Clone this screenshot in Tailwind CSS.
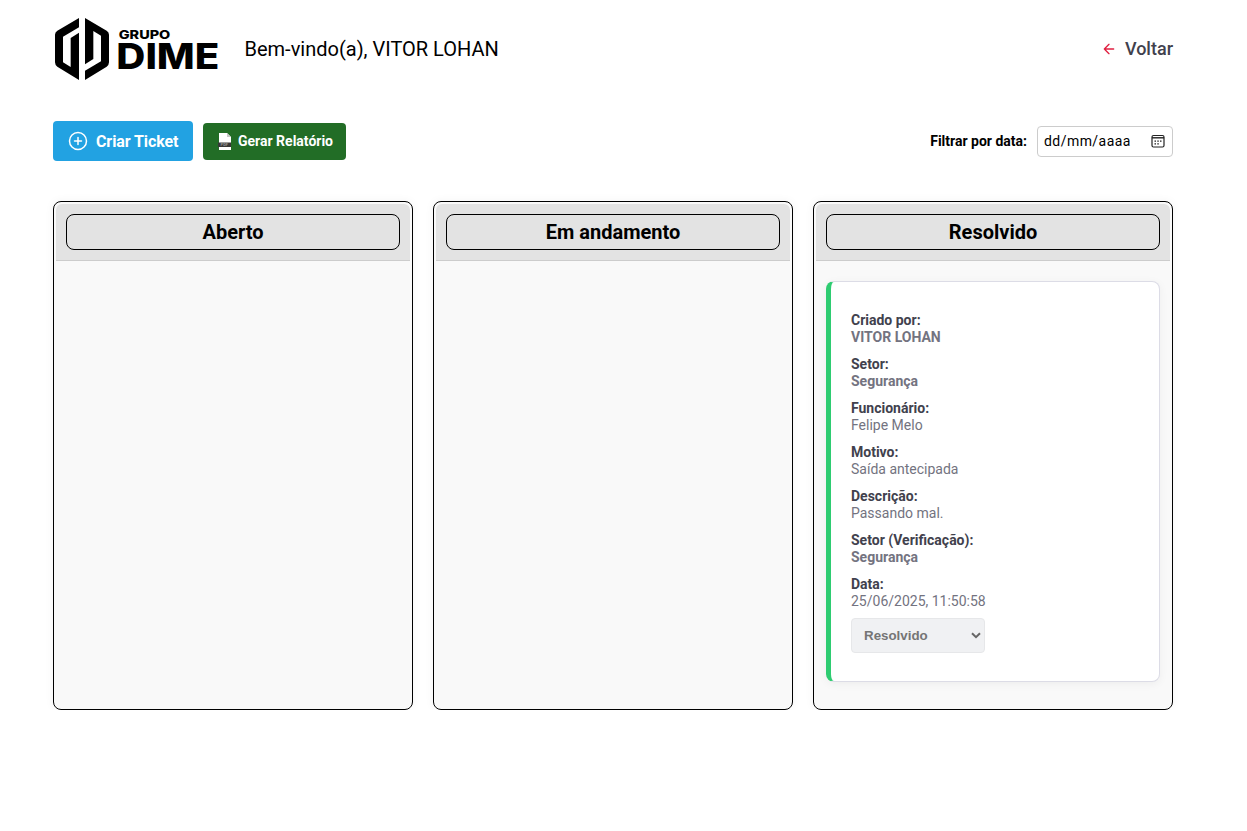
<!DOCTYPE html>
<html lang="pt-BR">
<head>
<meta charset="utf-8">
<title>Tickets</title>
<script src="https://cdn.jsdelivr.net/npm/@tailwindcss/browser@4"></script>
</head>
<body class="bg-white font-['Roboto',sans-serif] text-black">
<div class="ml-[53px] w-[1120px]">
  <header class="flex h-[98px] items-center">
    <svg class="-ml-[3px] mt-[-2px] h-[76px] w-[180px]" viewBox="0 0 540 228">
      <path d="M87 24 22 62Q15 66 15 74V157Q15 165 22 170L87 210V68L62 84V171L39 157V80L87 52Z"/>
      <path d="M105 24 170 62Q177 66 177 74V157Q177 165 170 170L105 210V182L153 154V77L130 63V147L105 163Z"/>
      <g font-family="Inter, sans-serif" font-weight="800">
        <text x="206" y="86" font-size="36" textLength="155" lengthAdjust="spacingAndGlyphs">GRUPO</text>
        <text x="199" y="177" font-size="107" textLength="309" lengthAdjust="spacingAndGlyphs">DIME</text>
      </g>
    </svg>
    <h1 class="ml-[14.5px] text-[20px] leading-6">Bem-vindo(a), VITOR LOHAN</h1>
    <a class="ml-auto flex items-center text-[18px] font-medium text-[#41414d]">
      <svg class="mr-2 size-4" viewBox="0 0 24 24" fill="none" stroke="#e02041" stroke-width="2" stroke-linecap="round" stroke-linejoin="round"><path d="M19 12H5M12 19l-7-7 7-7"/></svg><span class="-mt-[2px]">Voltar</span></a>
  </header>
  <div class="mt-[23px] flex h-10 items-center">
    <button class="flex h-10 w-[140px] items-center rounded-[4px] bg-[#22a2e2] pl-[15px] text-[16px] font-bold tracking-[-0.1px] whitespace-nowrap text-white">
      <svg class="mr-2 size-5" viewBox="0 0 20 20" fill="none" stroke="white" stroke-width="1.5" stroke-linecap="round"><circle cx="10" cy="10" r="8.5"/><path d="M10 6.5v7M6.5 10h7"/></svg><span class="mt-[2px]">Criar Ticket</span></button>
    <button class="mt-px ml-[10px] flex h-[37px] w-[143px] items-center rounded-[4px] bg-[#226d26] pl-[15px] text-[14px] font-bold whitespace-nowrap text-white">
      <svg class="mr-[6px] h-[17px] w-[14px]" viewBox="0 0 14 17"><path d="M1 0h8L13 4V17H1Z" fill="white"/><path d="M9 0v4H13Z" fill="#c8c8c8"/><path d="M0 9.5h13v4.5H0Z" fill="#383838"/><text x="2.6" y="13.2" font-family="Roboto, sans-serif" font-size="4" font-weight="700" fill="#999">PDF</text></svg>Gerar Relatório</button>
    <label class="mr-[10px] ml-auto text-[14px] font-bold">Filtrar por data:</label>
    <div class="mt-px flex h-[31px] w-[136px] items-center justify-between rounded-[4px] border border-[#ccc] pr-[7px] pl-[6px] text-[14px]"><span class="tracking-[0.45px]">dd/mm/aaaa</span>
      <svg class="-mt-px size-[14px]" viewBox="0 0 14 14" fill="none" stroke="#222"><rect x="1" y="1.5" width="12" height="11.5" rx="1.5" stroke-width="1.2"/><path d="M1 3.8h12" stroke-width="1.4"/><path d="M6.3 7.2h1.5M9 7.2h1.5M3.5 7.2H5M3.5 9.8H5M6.3 9.8h1.5" stroke-width="1.3"/></svg>
    </div>
  </div>
  <main class="mt-10 flex gap-5">
    <section class="h-[509px] w-[360px] rounded-[8px] border border-black bg-[#f9f9f9] p-[2px] shadow-[0_0_10px_rgba(0,0,0,0.05)]">
      <div class="h-[57px] rounded-t-[6px] border-b border-[#ccc] bg-[#e3e3e3] px-[10px] pt-[10px]"><h2 class="flex h-9 items-center justify-center rounded-[8px] border border-black text-[20px] font-bold">Aberto</h2></div>
    </section>
    <section class="h-[509px] w-[360px] rounded-[8px] border border-black bg-[#f9f9f9] p-[2px] shadow-[0_0_10px_rgba(0,0,0,0.05)]">
      <div class="h-[57px] rounded-t-[6px] border-b border-[#ccc] bg-[#e3e3e3] px-[10px] pt-[10px]"><h2 class="flex h-9 items-center justify-center rounded-[8px] border border-black text-[20px] font-bold">Em andamento</h2></div>
    </section>
    <section class="h-[509px] w-[360px] rounded-[8px] border border-black bg-[#f9f9f9] p-[2px] shadow-[0_0_10px_rgba(0,0,0,0.05)]">
      <div class="h-[57px] rounded-t-[6px] border-b border-[#ccc] bg-[#e3e3e3] px-[10px] pt-[10px]"><h2 class="flex h-9 items-center justify-center rounded-[8px] border border-black text-[20px] font-bold">Resolvido</h2></div>
      <article class="mx-[10px] mt-5 h-[401px] rounded-[8px] border border-l-[5px] border-[#dcdce6] border-l-[#2ecc71] bg-white pt-[30px] pl-5 text-[14px] leading-[17px] text-[#737380] shadow-[0_2px_10px_rgba(0,0,0,0.05)]">
        <dl class="flex flex-col gap-[10px]">
          <div><dt class="font-bold text-[#41414d]">Criado por:</dt><dd class="font-bold">VITOR LOHAN</dd></div>
          <div><dt class="font-bold text-[#41414d]">Setor:</dt><dd class="font-bold">Segurança</dd></div>
          <div><dt class="font-bold text-[#41414d]">Funcionário:</dt><dd>Felipe Melo</dd></div>
          <div><dt class="font-bold text-[#41414d]">Motivo:</dt><dd>Saída antecipada</dd></div>
          <div><dt class="font-bold text-[#41414d]">Descrição:</dt><dd>Passando mal.</dd></div>
          <div><dt class="font-bold text-[#41414d]">Setor (Verificação):</dt><dd class="font-bold">Segurança</dd></div>
          <div><dt class="font-bold text-[#41414d]">Data:</dt><dd>25/06/2025, 11:50:58</dd></div>
        </dl>
        <div class="mt-2 flex h-[35px] w-[134px] items-center justify-between rounded-[4px] border border-[#e6e7e9] bg-[#f0f1f3] pr-[3px] pl-3 font-['Liberation_Sans',sans-serif] text-[13.333px] font-bold text-[#757575]">Resolvido
          <svg class="h-[7px] w-[10px]" viewBox="0 0 10 7" fill="none" stroke="#666" stroke-width="2"><path d="M1 1.2 5 5.2 9 1.2"/></svg>
        </div>
      </article>
    </section>
  </main>
</div>
</body>
</html>
